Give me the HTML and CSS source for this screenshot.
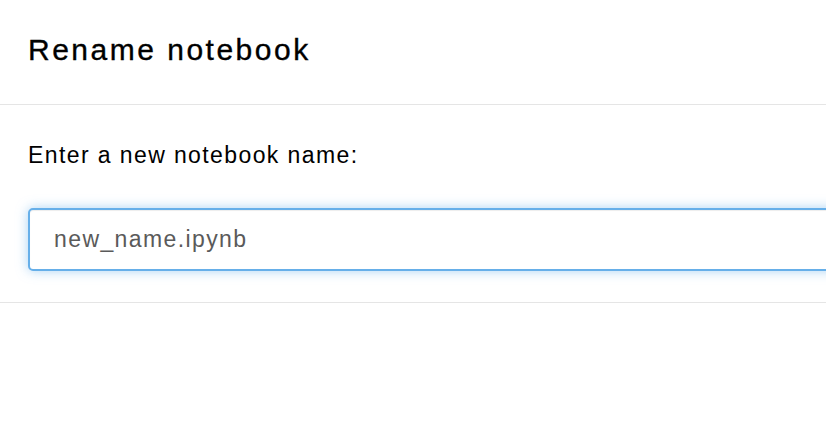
FILE: index.html
```html
<!DOCTYPE html>
<html lang="en">
<head>
<meta charset="utf-8">
<title>Rename notebook</title>
<link rel="stylesheet" href="styles.css">
</head>
<body>
<div class="modal">
  <div class="modal-header">
    <h4 class="modal-title">Rename notebook</h4>
  </div>
  <div class="modal-body">
    <p class="label">Enter a new notebook name:</p>
    <input class="name-input" type="text" placeholder="new_name.ipynb">
  </div>
  <div class="modal-footer"></div>
</div>
</body>
</html>
```
FILE: styles.css
```css
html, body {
  margin: 0;
  padding: 0;
  background: #ffffff;
  overflow: hidden;
}
body {
  font-family: "Liberation Sans", Arial, Helvetica, sans-serif;
  color: #000;
}
.modal {
  width: 920px;
}
.modal-header {
  padding: 30px 28px 35px;
  border-bottom: 1px solid #e5e5e5;
}
.modal-title {
  margin: 0;
  font-size: 30px;
  line-height: 39px;
  font-weight: normal;
  letter-spacing: 2.5px;
  -webkit-text-stroke: 0.35px #000;
}
.modal-body {
  padding: 34px 28px 31px;
}
.label {
  margin: 0 0 37px;
  font-size: 23px;
  line-height: 32px;
  letter-spacing: 1.4px;
}
.name-input {
  display: block;
  box-sizing: border-box;
  width: 100%;
  height: 63px;
  margin: 0;
  padding: 0 24px;
  border: 2px solid #66afe9;
  border-radius: 5px;
  outline: none;
  font-family: "Liberation Sans", Arial, Helvetica, sans-serif;
  font-size: 23px;
  letter-spacing: 1.4px;
  color: #555;
  background: #fff;
  box-shadow: inset 0 1px 1px rgba(0,0,0,0.075), 0 0 12px rgba(102,175,233,0.55);
}
.name-input::placeholder {
  color: #5a5a5a;
  opacity: 1;
}
.modal-footer {
  border-top: 1px solid #e5e5e5;
  height: 120px;
}
```
